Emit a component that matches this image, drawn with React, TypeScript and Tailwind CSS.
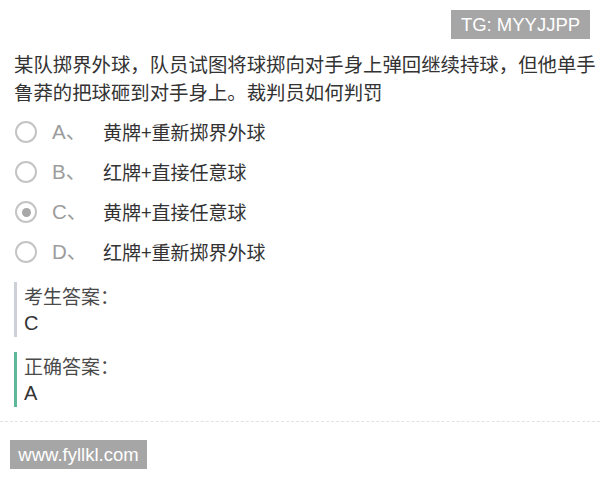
const options = [
  { key: 'A', text: '黄牌+重新掷界外球', checked: false },
  { key: 'B', text: '红牌+直接任意球', checked: false },
  { key: 'C', text: '黄牌+直接任意球', checked: true },
  { key: 'D', text: '红牌+重新掷界外球', checked: false },
];

function Radio({ checked }: { checked: boolean }) {
  return (
    <span className="flex h-[22px] w-[22px] shrink-0 items-center justify-center rounded-full border-2 border-[#c4c4c4]">
      {checked && <span className="h-[9px] w-[9px] rounded-full bg-[#a8a8a8]" />}
    </span>
  );
}

function AnswerBlock({ label, value, bar }: { label: string; value: string; bar: string }) {
  return (
    <div className={`ml-[14px] border-l-[3px] pl-[7px] ${bar}`}>
      <div className="text-[19px] leading-[27px] text-[#4a4a4a]">{label}</div>
      <div className="font-['Liberation_Sans',sans-serif] text-[20px] leading-[28px] text-[#333]">{value}</div>
    </div>
  );
}

export default function App() {
  return (
    <div className="min-h-[480px] w-[600px] overflow-hidden bg-white font-['Noto_Sans_CJK_SC','Liberation_Sans',sans-serif]">
      <div className="flex justify-end pr-[10px] pt-[10px]">
        <div className="flex h-[29px] w-[139px] items-center justify-center bg-[#a6a6a6] font-['Liberation_Sans',sans-serif] text-[18.5px] text-white">
          TG: MYYJJPP
        </div>
      </div>

      <p className="mt-[11px] pl-[14px] text-[19.4px] leading-[28px] text-[#333]">
        某队掷界外球，队员试图将球掷向对手身上弹回继续持球，但他单手鲁莽的把球砸到对手身上。裁判员如何判罚
      </p>

      <div className="mt-[6px] flex flex-col">
        {options.map((o) => (
          <div key={o.key} className="flex h-[40px] items-center pl-[15px]">
            <Radio checked={o.checked} />
            <span className="ml-[15px] w-[50px] shrink-0 font-['Liberation_Sans','Noto_Sans_CJK_SC',sans-serif] text-[20.5px] text-[#9c9c9c]">
              {o.key}、
            </span>
            <span className="ml-[1px] text-[19px] text-[#333]">{o.text}</span>
          </div>
        ))}
      </div>

      <div className="mt-[10px] flex flex-col gap-[15px]">
        <AnswerBlock label="考生答案：" value="C" bar="border-[#cdd0d6]" />
        <AnswerBlock label="正确答案：" value="A" bar="border-[#5cb897]" />
      </div>

      <div className="mt-[14px] border-t border-dashed border-[#e2e2e2]" />

      <div className="pl-[10px] pt-[18px]">
        <div className="flex h-[29px] w-[137px] items-center justify-center bg-[#a6a6a6] font-['Liberation_Sans',sans-serif] text-[18.5px] text-white">
          www.fyllkl.com
        </div>
      </div>
    </div>
  );
}
